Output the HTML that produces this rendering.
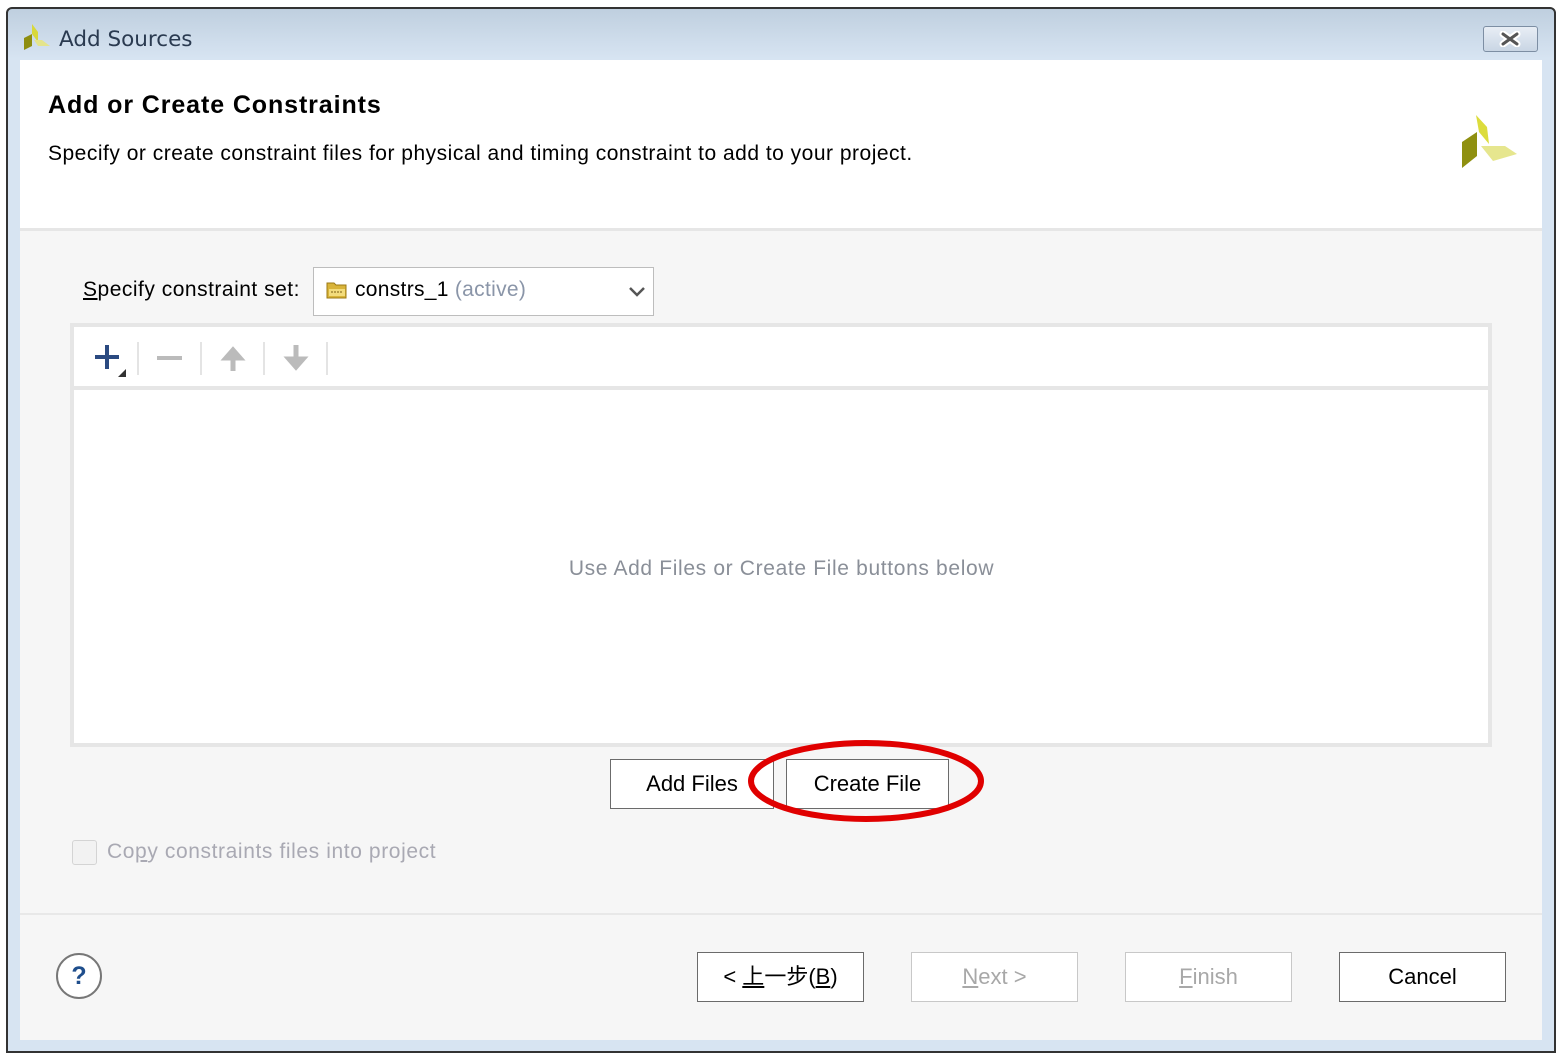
<!DOCTYPE html>
<html><head><meta charset="utf-8"><style>
*{margin:0;padding:0;box-sizing:border-box}
body{width:1563px;height:1059px;background:#fff;position:relative;overflow:hidden;font-family:"Liberation Sans","Noto Sans CJK SC",sans-serif;color:#000}
.abs{position:absolute}
.btn{position:absolute;background:#fff;border:1px solid #6b6b6b;font-size:22px;text-align:center;line-height:48px;height:50px}
.dis{border-color:#c8c8c8;color:#a8a8a8}
u{text-decoration:underline}
</style></head><body>
<div class="abs" style="left:6px;top:7px;width:1550px;height:1046px;border:2px solid #333;border-radius:6px 6px 0 0;background:linear-gradient(#bfcfdf,#d7e4f2 50px,#d7e4f2)"></div>
<svg class="abs" style="left:20px;top:22px" width="32" height="32" viewBox="0 0 32 32">
<polygon points="12,2 18,10 18,20 12,12" fill="#d8d83c"/>
<polygon points="4,16 12,12 12,24 4,28" fill="#8e8e10"/>
<polygon points="14,18 22,18 30,24 18,24" fill="#e4e48c"/>
</svg>
<div class="abs" style="left:59px;top:27px;font-size:21.5px;color:#2a3a50;font-family:'DejaVu Sans','Liberation Sans',sans-serif">Add Sources</div>
<div class="abs" style="left:1483px;top:26px;width:55px;height:26px;border:1px solid #7d8ea3;border-radius:3px;background:linear-gradient(#e8eef5,#c9d6e4)"></div>
<svg class="abs" style="left:1498px;top:31px" width="24" height="16" viewBox="0 0 24 16"><path d="M5 3 L19 13 M19 3 L5 13" stroke="#fff" stroke-width="7" stroke-linecap="round"/><path d="M5 3 L19 13 M19 3 L5 13" stroke="#555" stroke-width="3" stroke-linecap="round"/></svg>
<div class="abs" style="left:20px;top:60px;width:1522px;height:980px;background:#f6f6f6"></div>
<div class="abs" style="left:20px;top:60px;width:1522px;height:171px;background:#fff;border-bottom:3px solid #e6e6e6"></div>
<div class="abs" style="left:48px;top:91px;font-size:25px;font-weight:bold;letter-spacing:0.9px">Add or Create Constraints</div>
<div class="abs" style="left:48px;top:142px;font-size:21px;letter-spacing:0.5px">Specify or create constraint files for physical and timing constraint to add to your project.</div>
<svg class="abs" style="left:1455px;top:110px" width="66" height="66" viewBox="0 0 66 66">
<polygon points="21,5 32,17 34,34 24,22" fill="#dcdc3c"/>
<polygon points="7,32 22,22 22,46 7,58" fill="#8f9010"/>
<polygon points="26,36 50,36 62,44 38,51" fill="#e6e68e"/>
</svg>
<div class="abs" style="left:83px;top:278px;font-size:21px;letter-spacing:0.5px"><u>S</u>pecify constraint set:</div>
<div class="abs" style="left:313px;top:267px;width:341px;height:49px;background:#fff;border:1px solid #bdbdbd"></div>
<svg class="abs" style="left:326px;top:280px" width="22" height="20" viewBox="0 0 22 20"><path d="M1 3h7l2 2h10v13H1z" fill="#d9b43a" stroke="#9c7a14"/><rect x="3" y="9" width="16" height="7" fill="#f3dc7c"/><path d="M5 12h12" stroke="#7a5d10" stroke-dasharray="2 1"/></svg>
<div class="abs" style="left:355px;top:278px;font-size:21px;letter-spacing:0.3px">constrs_1 <span style="color:#8a95a8">(active)</span></div>
<svg class="abs" style="left:628px;top:286px" width="18" height="12" viewBox="0 0 18 12"><path d="M2 2l7 7 7-7" fill="none" stroke="#555" stroke-width="2.5"/></svg>
<div class="abs" style="left:70px;top:323px;width:1422px;height:424px;border:4px solid #e6e6e6;background:#fff"></div>
<div class="abs" style="left:74px;top:386px;width:1414px;height:4px;background:#e6e6e6"></div>
<svg class="abs" style="left:88px;top:340px" width="250" height="40" viewBox="0 0 250 40">
<path d="M19 5v24M7 17h24" stroke="#2b4a80" stroke-width="4"/>
<polygon points="30,37 38,37 38,29" fill="#333"/>
<path d="M50 2v33M113 2v33M176 2v33M239 2v33" stroke="#dcdcdc" stroke-width="1.5"/>
<path d="M69 18h25" stroke="#bbb" stroke-width="4"/>
<path d="M145 31V16M138 18l7-8 7 8z" stroke="#bbb" stroke-width="5" fill="#bbb"/>
<path d="M208 5v15M201 19l7 8 7-8z" stroke="#bbb" stroke-width="5" fill="#bbb"/>
</svg>
<div class="abs" style="left:0;width:1563px;top:557px;text-align:center;font-size:21px;color:#8a8f98;letter-spacing:0.65px">Use Add Files or Create File buttons below</div>
<div class="btn" style="left:610px;top:759px;width:164px;line-height:47px">Add Files</div>
<div class="btn" style="left:786px;top:759px;width:163px;line-height:47px">Create File</div>
<svg class="abs" style="left:745px;top:735px" width="245" height="92" viewBox="0 0 245 92"><ellipse cx="121" cy="46" rx="115" ry="38" fill="none" stroke="#e00000" stroke-width="6"/></svg>
<div class="abs" style="left:72px;top:840px;width:25px;height:25px;border:1px solid #d4d4d4;border-radius:3px;background:#f2f2f2"></div>
<div class="abs" style="left:107px;top:840px;font-size:21px;color:#a9a9b3;letter-spacing:0.6px">Co<u>p</u>y constraints files into project</div>
<div class="abs" style="left:20px;top:913px;width:1522px;height:2px;background:#e8e8e8"></div>
<div class="abs" style="left:56px;top:953px;width:46px;height:46px;border:2px solid #777;border-radius:50%;background:#fff;text-align:center;line-height:42px;font-size:25px;font-weight:bold;color:#1f4e8c">?</div>
<div class="btn" style="left:697px;top:952px;width:167px">&lt; <u>上</u>一步(<u>B</u>)</div>
<div class="btn dis" style="left:911px;top:952px;width:167px"><u>N</u>ext &gt;</div>
<div class="btn dis" style="left:1125px;top:952px;width:167px"><u>F</u>inish</div>
<div class="btn" style="left:1339px;top:952px;width:167px">Cancel</div>
</body></html>
